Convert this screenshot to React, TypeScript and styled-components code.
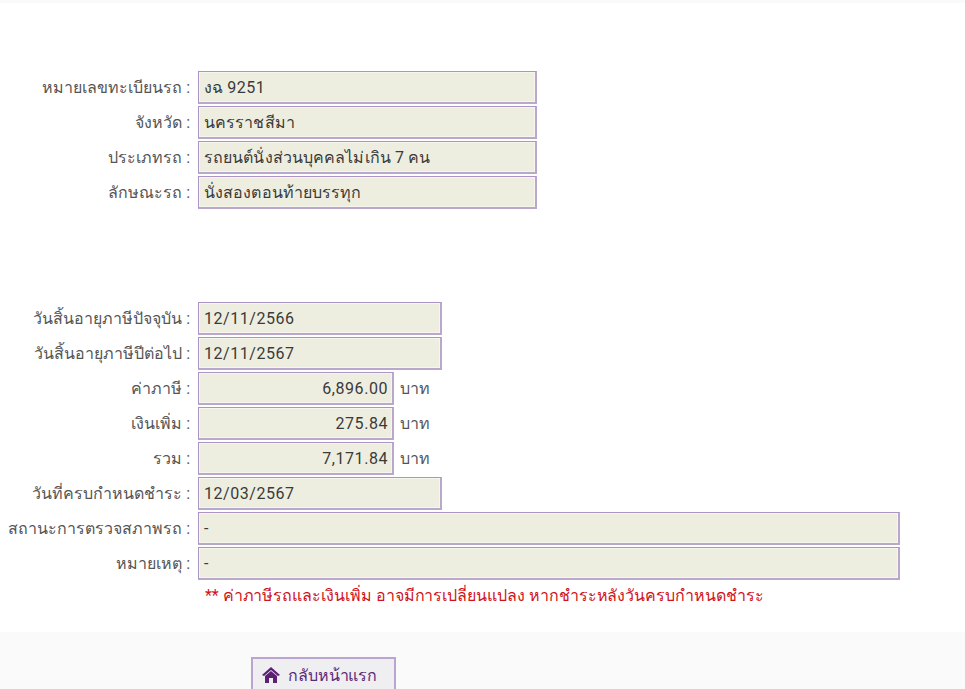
import React from 'react';
import styled, { createGlobalStyle } from 'styled-components';

const GlobalStyle = createGlobalStyle`
  html, body {
    margin: 0;
    padding: 0;
    background: #fff;
    overflow: hidden;
  }
  body {
    font-family: Roboto, "Noto Sans", "Liberation Sans", sans-serif;
    font-size: 16px;
    color: #333;
  }
`;

const Page = styled.div`
  width: 965px;
  height: 689px;
  display: flex;
  flex-direction: column;
  overflow: hidden;
`;

const TopStrip = styled.div`
  height: 3px;
  background: #fafafa;
`;

const Content = styled.main`
  flex: 1;
  display: flex;
  flex-direction: column;
  padding-top: 68px;
`;

const Group = styled.section<{ $gapAfter?: number }>`
  display: flex;
  flex-direction: column;
  gap: 2px;
  margin-bottom: ${(p) => p.$gapAfter ?? 0}px;
`;

const Row = styled.div`
  display: flex;
  align-items: center;
  height: 33px;
`;

const Label = styled.label`
  width: 190px;
  margin-right: 8px;
  flex: none;
  text-align: right;
  color: #555;
  white-space: nowrap;
`;

const Field = styled.div<{ $width: number; $right?: boolean; $numeric?: boolean }>`
  box-sizing: border-box;
  width: ${(p) => p.$width}px;
  height: 33px;
  padding: 0 ${(p) => (p.$right ? 4 : 5)}px 0 5px;
  display: flex;
  align-items: center;
  justify-content: ${(p) => (p.$right ? 'flex-end' : 'flex-start')};
  background: #eeeee0;
  border: 1px solid #ab94c6;
  border-bottom: 2px solid #b9a8cc;
  border-right: 2px solid #b9a8cc;
  box-shadow: inset 0 0 0 1px #f6f6ee;
  color: #3a3a3a;
  letter-spacing: ${(p) => (p.$numeric ? '0.55px' : '0.1px')};
  white-space: nowrap;
`;

const Digits = styled.span`
  letter-spacing: 0.5px;
`;

const Unit = styled.span`
  margin-left: 6px;
  color: #555;
`;

const Note = styled.p`
  margin: 1px 0 0 205px;
  height: 33px;
  line-height: 30px;
  color: #d0121b;
  letter-spacing: -0.05px;
  white-space: nowrap;
`;

const Footer = styled.footer`
  height: 57px;
  flex: none;
  background: #fafafa;
  padding: 25px 0 0 251px;
  box-sizing: border-box;
`;

const HomeButton = styled.button`
  box-sizing: border-box;
  width: 145px;
  height: 38px;
  padding: 0 0 4px 9px;
  display: flex;
  align-items: center;
  gap: 8px;
  background: #efeef1;
  border: 2px solid #b9a5cf;
  border-bottom: none;
  font: inherit;
  letter-spacing: -0.1px;
  color: #5b2a78;
`;

const HomeIcon = () => (
  <svg width="18" height="16" viewBox="0 0 18 16" aria-hidden="true">
    <path d="M9 0 L18 8 L16 9 L9 3 L2 9 L0 8 Z" fill="#5b1f73" />
    <path d="M3 9 L9 4 L15 9 V16 H11 V11 H7 V16 H3 Z" fill="#5b1f73" />
  </svg>
);

type Item = {
  label: string;
  value: React.ReactNode;
  width: number;
  right?: boolean;
  numeric?: boolean;
  unit?: string;
};

const vehicle: Item[] = [
  { label: 'หมายเลขทะเบียนรถ :', value: <span>งฉ <Digits>9251</Digits></span>, width: 339 },
  { label: 'จังหวัด :', value: 'นครราชสีมา', width: 339 },
  { label: 'ประเภทรถ :', value: 'รถยนต์นั่งส่วนบุคคลไม่เกิน 7 คน', width: 339 },
  { label: 'ลักษณะรถ :', value: 'นั่งสองตอนท้ายบรรทุก', width: 339 },
];

const tax: Item[] = [
  { label: 'วันสิ้นอายุภาษีปัจจุบัน :', value: '12/11/2566', width: 244, numeric: true },
  { label: 'วันสิ้นอายุภาษีปีต่อไป :', value: '12/11/2567', width: 244, numeric: true },
  { label: 'ค่าภาษี :', value: '6,896.00', width: 196, right: true, numeric: true, unit: 'บาท' },
  { label: 'เงินเพิ่ม :', value: '275.84', width: 196, right: true, numeric: true, unit: 'บาท' },
  { label: 'รวม :', value: '7,171.84', width: 196, right: true, numeric: true, unit: 'บาท' },
  { label: 'วันที่ครบกำหนดชำระ :', value: '12/03/2567', width: 244, numeric: true },
  { label: 'สถานะการตรวจสภาพรถ :', value: '-', width: 702 },
  { label: 'หมายเหตุ :', value: '-', width: 702 },
];

const renderRow = (item: Item) => (
  <Row key={item.label}>
    <Label>{item.label}</Label>
    <Field $width={item.width} $right={item.right} $numeric={item.numeric}>
      {item.value}
    </Field>
    {item.unit && <Unit>{item.unit}</Unit>}
  </Row>
);

function App() {
  return (
    <Page>
      <GlobalStyle />
      <TopStrip />
      <Content>
        <Group $gapAfter={93}>{vehicle.map(renderRow)}</Group>
        <Group>{tax.map(renderRow)}</Group>
        <Note>** ค่าภาษีรถและเงินเพิ่ม อาจมีการเปลี่ยนแปลง หากชำระหลังวันครบกำหนดชำระ</Note>
      </Content>
      <Footer>
        <HomeButton>
          <HomeIcon />
          กลับหน้าแรก
        </HomeButton>
      </Footer>
    </Page>
  );
}

export default App;
